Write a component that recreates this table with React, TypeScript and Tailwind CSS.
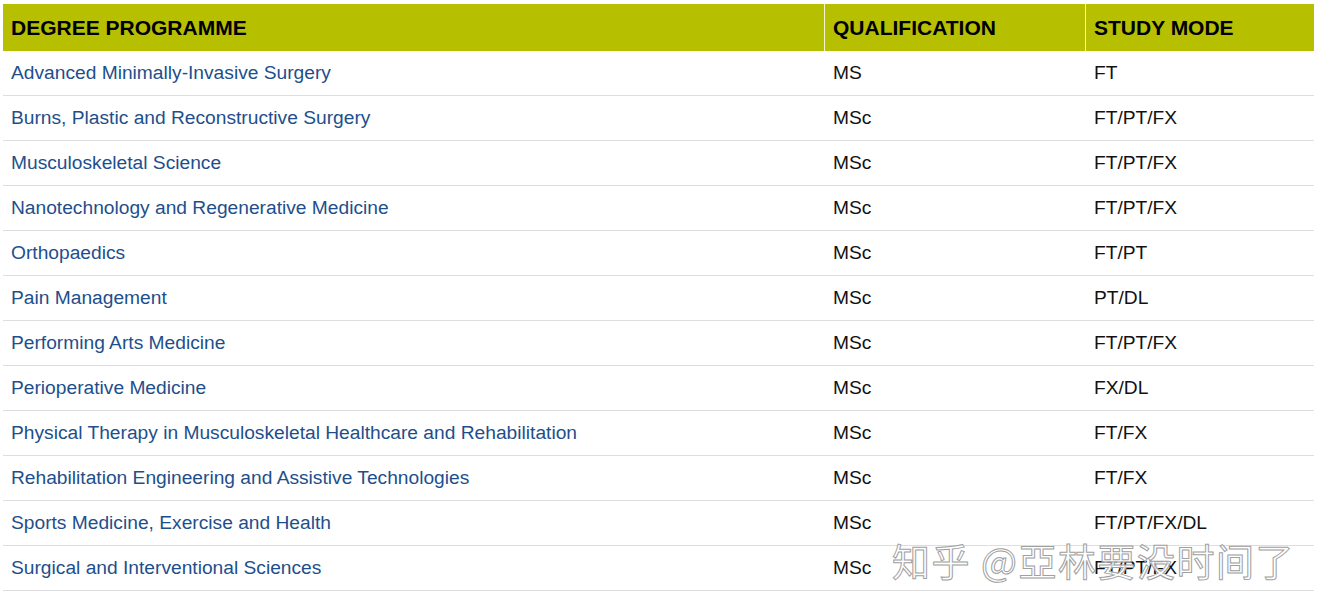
const rows: [string, string, string][] = [
  ["Advanced Minimally-Invasive Surgery", "MS", "FT"],
  ["Burns, Plastic and Reconstructive Surgery", "MSc", "FT/PT/FX"],
  ["Musculoskeletal Science", "MSc", "FT/PT/FX"],
  ["Nanotechnology and Regenerative Medicine", "MSc", "FT/PT/FX"],
  ["Orthopaedics", "MSc", "FT/PT"],
  ["Pain Management", "MSc", "PT/DL"],
  ["Performing Arts Medicine", "MSc", "FT/PT/FX"],
  ["Perioperative Medicine", "MSc", "FX/DL"],
  ["Physical Therapy in Musculoskeletal Healthcare and Rehabilitation", "MSc", "FT/FX"],
  ["Rehabilitation Engineering and Assistive Technologies", "MSc", "FT/FX"],
  ["Sports Medicine, Exercise and Health", "MSc", "FT/PT/FX/DL"],
  ["Surgical and Interventional Sciences", "MSc", "FT/PT/FX"],
];

export default function App() {
  return (
    <div className="relative w-[1322px] h-[612px] bg-white pt-1 pl-[3px] font-['Liberation_Sans',Arial,sans-serif]">
      <div className="w-[1311px]">
        <div className="grid grid-cols-[822px_261px_228px] h-[47px] bg-[#b6bf00] text-[21px] font-bold text-black">
          <div className="flex items-center px-2 border-r border-[#f4f6cc]">DEGREE PROGRAMME</div>
          <div className="flex items-center px-2 border-r border-[#f4f6cc]">QUALIFICATION</div>
          <div className="flex items-center px-2">STUDY MODE</div>
        </div>
        {rows.map(([name, q, mode]) => (
          <div key={name} className="grid grid-cols-[822px_261px_228px] h-[45px] border-b border-[#dedede] text-[19.2px]">
            <div className="flex items-center px-2">
              <a href="#" className="text-[#1e4f8c]">{name}</a>
            </div>
            <div className="flex items-center px-2 text-[#111]">{q}</div>
            <div className="flex items-center px-2 text-[#111]">{mode}</div>
          </div>
        ))}
      </div>
      <div className="absolute left-[892px] top-[531px] text-[38px] tracking-[1.5px] text-white/80 [-webkit-text-stroke:1px_#a0a0a0] font-['Noto_Sans_CJK_SC',sans-serif] whitespace-nowrap pointer-events-none">
        知乎 @亞林要没时间了
      </div>
    </div>
  );
}
